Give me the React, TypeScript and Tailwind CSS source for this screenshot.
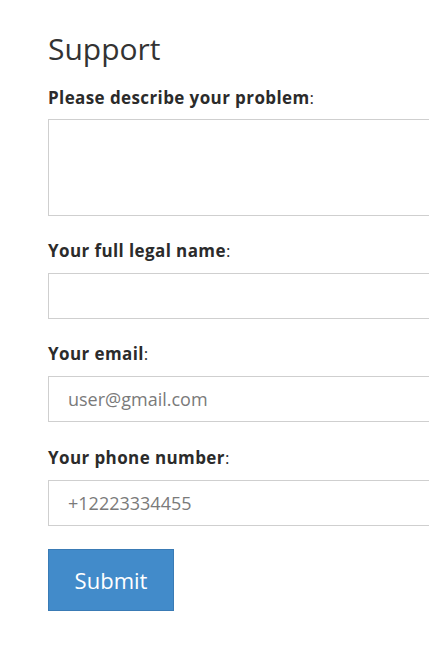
import React from "react";

// ─── Field ────────────────────────────────────────────────────────────────────

function Label({ children }: { children: React.ReactNode }) {
  return (
    <label className="block text-[17px] font-bold tracking-[0.4px] text-[#2b2b2b] leading-[20px]">
      {children}
      <span className="font-normal">:</span>
    </label>
  );
}

const inputCls =
  "block w-[420px] h-[46px] border border-[#cfcfcf] bg-white px-[19px] text-[18px] text-[#555] placeholder:text-[#7a7a7a] outline-none";

// ─── Component ────────────────────────────────────────────────────────────────

export default function App() {
  return (
    <div
      className="w-full h-[646px] overflow-hidden bg-white pl-[48px]"
      style={{ fontFamily: '"Open Sans", "DejaVu Sans", sans-serif' }}
    >
      <h1 className="pt-[29px] text-[30px] leading-[40px] text-[#333] font-medium">Support</h1>

      <div className="mt-[19px]">
        <Label>Please describe your problem</Label>
      </div>
      <textarea className="mt-[11px] block w-[420px] h-[97px] border border-[#cfcfcf] resize-none outline-none" />

      <div className="mt-[25px]">
        <Label>Your full legal name</Label>
      </div>
      <input className={`mt-[12px] ${inputCls}`} />

      <div className="mt-[25px]">
        <Label>Your email</Label>
      </div>
      <input className={`mt-[12px] ${inputCls}`} placeholder="user@gmail.com" />

      <div className="mt-[26px]">
        <Label>Your phone number</Label>
      </div>
      <input className={`mt-[12px] ${inputCls}`} placeholder="+12223334455" />

      <button className="mt-[23px] block w-[126px] h-[62px] bg-[#428bca] border border-[#3a7bb5] text-white text-[22px]">
        Submit
      </button>
    </div>
  );
}
